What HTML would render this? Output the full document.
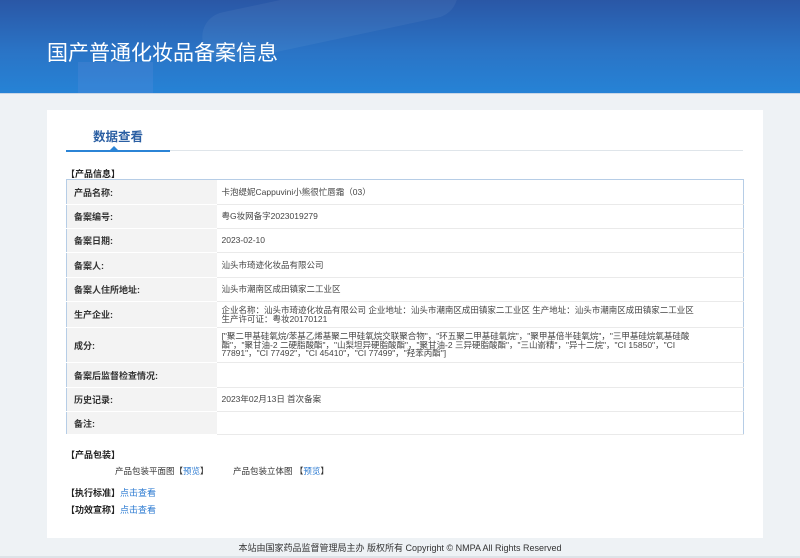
<!DOCTYPE html>
<html><head><meta charset="utf-8">
<style>
*{margin:0;padding:0;box-sizing:border-box}
body{width:800px;height:558px;overflow:hidden;background:#eef2f5;font-family:"Liberation Sans","Noto Sans CJK SC",sans-serif;color:#333;position:relative}
.hdr{position:absolute;left:0;top:0;width:800px;height:94px;background:linear-gradient(180deg,#2a57a6 0%,#2a74c6 55%,#2683d6 100%);overflow:hidden}
.hdr .b1{position:absolute;left:200px;top:-10px;width:260px;height:50px;border-radius:25px;background:rgba(255,255,255,0.05);transform:rotate(-12deg)}
.hdr .b3{position:absolute;left:78px;top:62px;width:75px;height:35px;background:rgba(120,150,230,0.18)}
.hdr h1{position:absolute;left:47px;top:37px;font-size:21px;font-weight:normal;color:#fff}
.hdr .line{position:absolute;left:0;top:93px;width:800px;height:2px;background:#c8d6e6}
.card{position:absolute;left:47px;top:110px;width:716px;height:428px;background:#fff}
.tab{position:absolute;left:93px;top:126px;font-size:12.5px;font-weight:bold;color:#2b5fa3}
.tline{position:absolute;left:66px;top:150px;width:677px;height:1px;background:#dfe5ea}
.tact{position:absolute;left:66px;top:150px;width:104px;height:2px;background:#2b84d6}
.tri{position:absolute;left:110px;top:146px;width:0;height:0;border-left:4px solid transparent;border-right:4px solid transparent;border-bottom:4px solid #2b84d6}
.sec{position:absolute;font-size:9px;font-weight:bold;color:#222}
table{position:absolute;left:66px;top:179px;width:678px;border-collapse:collapse;border:1px solid #b6cde6;font-size:8.5px}
td{border-bottom:1px solid #eaeaea;vertical-align:middle}
td.l{width:150px;background:#f3f3f3;font-weight:bold;padding-left:7px;color:#333;border-bottom:1px solid #fff;font-size:9px}
td.v{padding-left:5px;padding-right:40px;line-height:8.5px;color:#444}
.a{color:#2b7ad1}
.ft{position:absolute;left:0;top:541px;width:800px;text-align:center;font-size:9px;color:#333}
.fl{position:absolute;left:0;top:556px;width:800px;height:2px;background:#dde3e8}
</style></head><body>
<div class="hdr"><div class="b1"></div><div class="b3"></div><h1>国产普通化妆品备案信息</h1><div class="line"></div></div>
<div class="card"></div>
<div class="tab">数据查看</div>
<div class="tline"></div><div class="tact"></div><div class="tri"></div>
<div class="sec" style="left:66px;top:167px">【产品信息】</div>
<table>
<tr style="height:25px"><td class="l">产品名称:</td><td class="v">卡泡缇妮Cappuvini小熊很忙唇霜（03）</td></tr>
<tr style="height:24px"><td class="l">备案编号:</td><td class="v">粤G妆网备字2023019279</td></tr>
<tr style="height:24px"><td class="l">备案日期:</td><td class="v">2023-02-10</td></tr>
<tr style="height:25px"><td class="l">备案人:</td><td class="v">汕头市琦迹化妆品有限公司</td></tr>
<tr style="height:24px"><td class="l">备案人住所地址:</td><td class="v">汕头市潮南区成田镇家二工业区</td></tr>
<tr style="height:26px"><td class="l">生产企业:</td><td class="v">企业名称：汕头市琦迹化妆品有限公司 企业地址：汕头市潮南区成田镇家二工业区 生产地址：汕头市潮南区成田镇家二工业区 生产许可证：粤妆20170121</td></tr>
<tr style="height:35px"><td class="l">成分:</td><td class="v">["聚二甲基硅氧烷/苯基乙烯基聚二甲硅氧烷交联聚合物"，"环五聚二甲基硅氧烷"，"聚甲基倍半硅氧烷"，"三甲基硅烷氧基硅酸酯"，"聚甘油-2 二硬脂酸酯"，"山梨坦异硬脂酸酯"，"聚甘油-2 三异硬脂酸酯"，"三山嵛精"，"异十二烷"，"CI 15850"，"CI 77891"，"CI 77492"，"CI 45410"，"CI 77499"，"羟苯丙酯"]</td></tr>
<tr style="height:25px"><td class="l">备案后监督检查情况:</td><td class="v"></td></tr>
<tr style="height:24px"><td class="l">历史记录:</td><td class="v">2023年02月13日 首次备案</td></tr>
<tr style="height:23px"><td class="l">备注:</td><td class="v"></td></tr>
</table>
<div class="sec" style="left:66px;top:448px">【产品包装】</div>
<div style="position:absolute;left:115px;top:465px;font-size:8.5px">产品包装平面图【<span class="a">预览</span>】</div>
<div style="position:absolute;left:233px;top:465px;font-size:8.5px">产品包装立体图 【<span class="a">预览</span>】</div>
<div class="sec" style="left:66px;top:486px">【执行标准】<span class="a" style="font-weight:normal">点击查看</span></div>
<div class="sec" style="left:66px;top:503px">【功效宣称】<span class="a" style="font-weight:normal">点击查看</span></div>
<div class="ft">本站由国家药品监督管理局主办 版权所有 Copyright © NMPA All Rights Reserved</div>
<div class="fl"></div>
</body></html>
